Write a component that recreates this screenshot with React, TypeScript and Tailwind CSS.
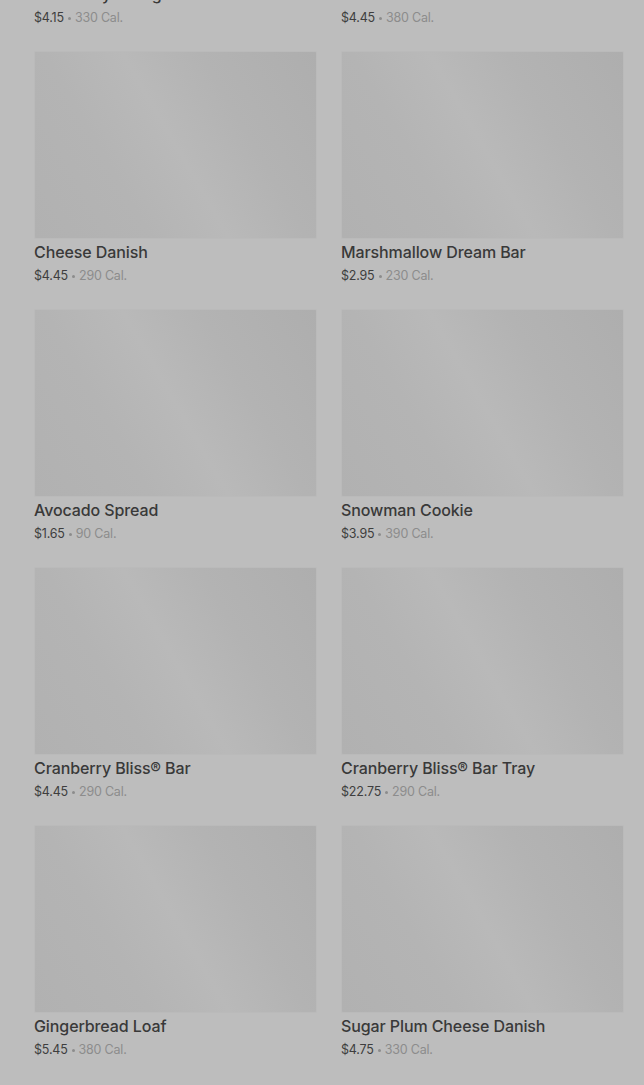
const ITEMS = [
  { name: "Cranberry Orange Loaf", price: "$4.15", cal: "330 Cal." },
  { name: "Cinnamon Coffee Cake", price: "$4.45", cal: "380 Cal." },
  { name: "Cheese Danish", price: "$4.45", cal: "290 Cal." },
  { name: "Marshmallow Dream Bar", price: "$2.95", cal: "230 Cal." },
  { name: "Avocado Spread", price: "$1.65", cal: "90 Cal." },
  { name: "Snowman Cookie", price: "$3.95", cal: "390 Cal." },
  { name: "Cranberry Bliss® Bar", price: "$4.45", cal: "290 Cal." },
  { name: "Cranberry Bliss® Bar Tray", price: "$22.75", cal: "290 Cal." },
  { name: "Gingerbread Loaf", price: "$5.45", cal: "380 Cal." },
  { name: "Sugar Plum Cheese Danish", price: "$4.75", cal: "330 Cal." },
];

function ProductCard({ item }: { item: (typeof ITEMS)[number] }) {
  return (
    <div className="flex flex-col">
      {/* image placeholder, shimmer band */}
      <div className="h-[188px] w-full rounded-[2px] border border-[#bababa] bg-[linear-gradient(60deg,#b1b1b1_0%,#b4b4b4_30%,#b9b9b9_50%,#b3b3b3_70%,#aeaeae_100%)]" />
      <h3 className="mt-[2px] text-[16px] font-medium leading-[22px] tracking-[-0.1px] text-[#393939]">
        {item.name}
      </h3>
      <p className="mt-[4px] flex items-center text-[12.5px] leading-[18px] tracking-[-0.2px] text-[#3e3e3e]">
        <span>{item.price}</span>
        <span className="mx-[4px] inline-block size-[3px] rounded-full bg-[#8c8c8c]" />
        <span className="text-[#8c8c8c]">{item.cal}</span>
      </p>
    </div>
  );
}

export default function App() {
  return (
    <div
      className="h-[1085px] w-[644px] overflow-hidden bg-[#bdbdbd]"
      style={{ fontFamily: "Inter, 'Noto Sans', sans-serif" }}
    >
      <div className="-mt-[207px] grid grid-cols-2 gap-x-[24px] gap-y-[24px] pl-[34px] pr-[20px]">
        {ITEMS.map((item) => (
          <ProductCard key={item.name} item={item} />
        ))}
      </div>
    </div>
  );
}
